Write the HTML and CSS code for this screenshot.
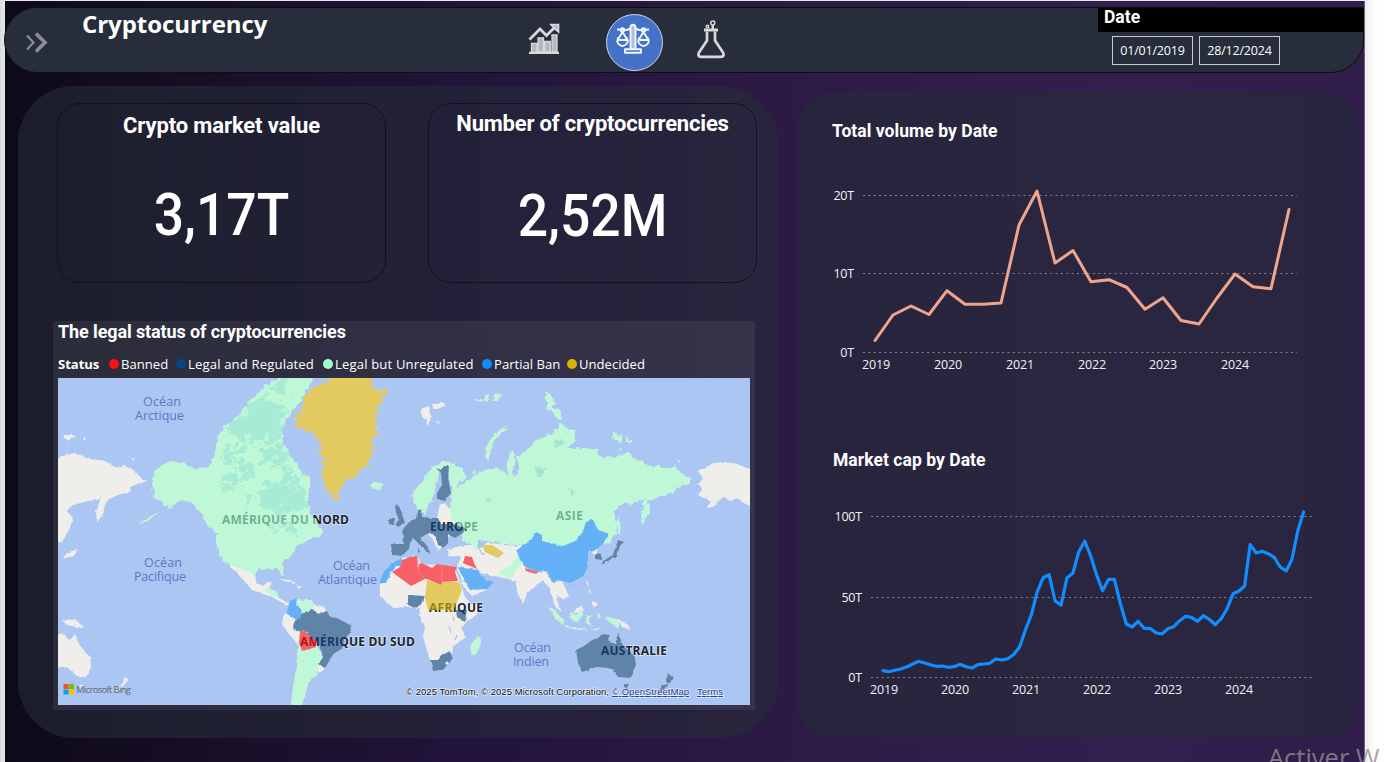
FILE: index.html
```html
<!DOCTYPE html>
<html lang="en">
<head>
<meta charset="utf-8">
<title>Cryptocurrency</title>
<link rel="stylesheet" href="styles.css">
</head>
<body>
<div class="window">
<div class="report">
  <header class="topbar">
    <svg class="chevrons" width="24" height="22" viewBox="0 0 24 22"><path d="M2 3.5 8.500 10.500 2 17.500" stroke-width="2.200"/><path d="M11 1.500 20 10.500 11 19.500" stroke-width="3.600"/></svg>
    <h1 class="brand">Cryptocurrency</h1>
    <nav class="nav">
      <a class="nav-item nav-chart"><svg width="32" height="32" viewBox="0 0 32 32"><g fill="none" stroke="#d8d9dc"><path d="M1 29.800h30" stroke-width="2.200"/><g fill="#b4b7bc" stroke-width="1.300"><path d="M3.500 20.500h5.500v9h-5.500zM10 15h5.500v14H10zM16.800 18.500h5.500V29h-5.500zM24 12h5v17h-5z"/></g><path d="M1.500 16.500 12 6l6.500 6.500L27 4" stroke-width="2.800"/><path d="M23 1.500h7.500V9l-3-2.500z" fill="#b4b7bc" stroke-width="1.700"/></g></svg></a>
      <a class="nav-item nav-scales"><svg width="34" height="32" viewBox="0 0 34 32"><g fill="none" stroke="#f2f5fb" stroke-width="1.900" stroke-linejoin="round"><path fill="#a9bfe6" d="M14.500 26V4.500Q14.500 1.800 17 1.800t2.500 2.700V26"/><path d="M9 26.200h16v3.600H9z"/><path d="M14.500 5.500 11 7 1 6.500M19.500 5.500 23 7l10-.5" stroke-width="2"/><circle cx="6.500" cy="7" r="1.800"/><circle cx="27.500" cy="7" r="1.800"/><path d="M6.500 9 2.500 15.500M6.500 9l4 6.500M27.500 9l-4 6.500M27.500 9l4 6.500M1 17h11M22 17h11"/><path d="M2.500 14.500Q.3 18 2.100 20.500 4 23 6.500 23t4.400-2.500q1.800-2.500-.4-6M23.500 14.500q-2.200 3.500-.4 6Q25 23 27.500 23t4.400-2.500q1.800-2.500-.4-6"/></g></svg></a>
      <a class="nav-item nav-flask"><svg width="28" height="40" viewBox="0 0 28 40"><g fill="none" stroke="#d8d9dc" stroke-width="2" stroke-linejoin="round"><path d="M10 11.500v9L2 32.500q-1.800 4 2 4.300h20q3.800-.3 2-4.300L18 20.500v-9" stroke-width="2.700"/><path d="M7 10h14" stroke-width="3"/><circle cx="15.800" cy="3" r="2" stroke-width="1.500"/><circle cx="10.500" cy="6.500" r="1.300" stroke-width="1.400"/><path d="M15.800 5v5" stroke-width="2.400"/></g></svg></a>
    </nav>
    <section class="date-filter">
      <h2 class="date-title">Date</h2>
      <div class="date-fields"><span class="date-box">01/01/2019</span><span class="date-box">28/12/2024</span></div>
    </section>
  </header>

  <main class="content">
    <section class="panel panel-left">
      <div class="cards">
        <article class="card"><h2 class="card-title">Crypto market value</h2><p class="card-value">3,17T</p></article>
        <article class="card card-count"><h2 class="card-title">Number of cryptocurrencies</h2><p class="card-value">2,52M</p></article>
      </div>
      <article class="map-card">
        <h2 class="map-title">The legal status of cryptocurrencies</h2>
        <ul class="legend">
          <li class="legend-name">Status</li>
          <li class="key"><i class="dot banned"></i><span class="w1">Banned</span></li>
          <li class="key"><i class="dot regulated"></i><span class="w2">Legal and Regulated</span></li>
          <li class="key"><i class="dot unregulated"></i><span class="w3">Legal but Unregulated</span></li>
          <li class="key"><i class="dot partial"></i><span class="w4">Partial Ban</span></li>
          <li class="key"><i class="dot undecided"></i><span class="w5">Undecided</span></li>
        </ul>
        <svg class="map" width="692" height="327" viewBox="58 378 692 327">
          <defs>
            <filter id="coast" x="-5%" y="-5%" width="110%" height="110%"><feTurbulence type="fractalNoise" baseFrequency="0.18" numOctaves="3" seed="4"/><feDisplacementMap in="SourceGraphic" scale="7" xChannelSelector="R" yChannelSelector="G"/></filter>
            <filter id="fjords" x="-10%" y="-5%" width="120%" height="110%"><feTurbulence type="fractalNoise" baseFrequency="0.12 0.3" numOctaves="3" seed="7"/><feDisplacementMap in="SourceGraphic" scale="15" xChannelSelector="R" yChannelSelector="G"/></filter>
            <filter id="border" x="-5%" y="-5%" width="110%" height="110%"><feTurbulence type="fractalNoise" baseFrequency="0.2" numOctaves="2" seed="9"/><feDisplacementMap in="SourceGraphic" scale="3" xChannelSelector="R" yChannelSelector="G"/></filter>
            <filter id="patchy" x="-10%" y="-10%" width="120%" height="120%"><feTurbulence type="fractalNoise" baseFrequency="0.1" numOctaves="4" seed="2"/><feDisplacementMap in="SourceGraphic" scale="32" xChannelSelector="R" yChannelSelector="G"/></filter>
            <path id="america" d="M152 483 155 470 167 462 183 464 198 469 210 467 215 453 217 440 223 427 237 417 250 400 263 388 277 378 280 374H314L310 385 300 400 292 410 283 427 282 443 288 450 295 463 310 480 308 497 308 508 313 517 323 533 313 538 298 545 290 557 282 563 284 575 280 574 277 568 258 569 255 575 233 565 223 560 217 550 216 533 207 523 200 512 193 503 183 500 173 504 157 515 168 507 162 503 155 497Z"/>
            <g id="green">
              <g filter="url(#coast)">
                <use href="#america"/>
                <path d="M370 485 376 482 383 484 381 489 373 490Z"/>
                <path d="M412 502 413 492 423 482 432 467 442 462 450 462 465 472 466 479 458 482 456 488 470 480 477 474 493 468 503 470 508 477 507 462 512 450 515 462 512 477 519 474 517 457 527 450 537 440 553 433 560 423 567 428 575 432 574 440 568 448 583 448 597 450 600 458 617 457 628 453 637 460 653 467 673 467 690 478 690 485 676 487 675 492 657 498 649 501 650 510 643 524 640 517 642 507 647 498 637 503 620 505 612 513 618 523 617 533 608 543 602 545 596 534 583 550H560L537 542 520 545 503 544 490 541 478 540 480 550 467 543 462 537 465 530 453 520 450 507 452 493 448 470 440 470 435 493 430 503 425 513 419 511 416 505Z"/>
                <path d="M507 428 498 436 492 446 489 460 485 459 487 445 493 434 504 427ZM546 393 551 394 555 408 561 412 562 420 556 418 552 411 546 408ZM612 433 624 435 621 441 613 440ZM625 437l7 3-4 2ZM474 400l7-2 2 3-6 1ZM485 396l5-2-1 7-3 0ZM493 397l9-4-4 7-4 0ZM618 447l4 2-3 2ZM676 459l5-1-1 3ZM472 472l4-2-3 7Z"/>
              </g>
              <g filter="url(#border)">
                <path d="M265 590 269 588 277 592 278 598 273 596ZM295 599 303 600 312 600 314 605 310 610 307 615 301 611 297 605Z"/>
                <path d="M298 642 302 650 309 650 317 646 323 657 317 665 319 672 313 678 308 683 306 692 302 705H291L293 687 297 667Z"/>
                <path d="M517 556 523 560 513 577 508 578 498 573 503 568 511 565Z"/>
                <path d="M480 636 481 643 477 653 472 656 470 647 473 641ZM548 607 553 609 565 622 563 625 556 619ZM565 625 577 628 588 629 579 630 566 627ZM570 612 576 615 581 609 583 614 578 622 571 620ZM586 617l7-2-5 4 3 6-4 0ZM597 613l3 2-1 4ZM605 618 610 617 619 620 619 628 611 623ZM591 629l10-1-7 3Z"/>
                <path d="M618 517l3 8-1 9-2-3ZM148 518l10-6-9 8-11 4Z"/>
              </g>
            </g>
            <g id="yellow">
              <path filter="url(#fjords)" d="M297 427 295 418 303 410 305 398 312 388 327 382 333 374H370L373 387 387 391 378 407 375 420 377 430 373 440 372 453 368 465 355 475 343 483 338 500 328 493 324 483 323 467 320 447 317 435 308 430Z"/>
              <path d="M427 580 441 585 442 582 459 582 462 590 457 602 453 612 442 610 428 610 425 598Z"/>
              <path d="M483 545 492 545 504 553 498 558 485 552Z"/>
            </g>
            <g id="navy" filter="url(#border)">
              <path d="M298 615 308 612 313 609 318 614 327 611 330 617 337 618 352 626 350 633 344 640 343 648 332 655 328 663 325 668 318 664 323 658 321 648 317 642 310 637 305 631 300 632 293 628 294 623Z"/>
              <path d="M436 468 441 470 444 466 449 466 448 477 451 493 445 501 437 499 437 492 442 485 441 473Z"/>
              <path d="M395 505 399 506 402 514 405 523 398 527 395 525 399 520 396 513ZM390 518 395 518 394 525 388 524Z"/>
              <path d="M402 530 408 523 417 518 418 511 421 509 422 517 438 518 441 524 452 524 465 528 463 533 455 538 448 534 448 542 443 548 438 545 436 537 430 533 420 537 427 546 431 554 426 551 418 543 413 538 410 543 409 549 402 556 392 555 391 544 404 544ZM418 547l2 5-2 1Z"/>
              <path d="M408 595 425 596 422 604 415 608 408 605ZM456 610 467 610 465 622 457 617ZM430 660 438 660 442 655 450 651 453 658 443 670 433 671Z"/>
              <path d="M576 650 584 646 592 640 598 638 603 634 610 635 608 640 615 644 618 633 623 645 628 650 635 657 636 665 630 678 618 677 614 670 608 668 597 667 582 672 578 663ZM624 684h5l-2 5-3-1Z"/>
              <path d="M618 540 624 542 620 546 617 556 608 561 602 565 603 561 613 555ZM596 553l5 1 0 6-5-1ZM667 673 674 678 670 683 667 682ZM668 684l-6 8-6 2 7-9Z"/>
            </g>
            <g id="blue" filter="url(#border)">
              <path d="M297 598 290 601 286 613 295 619 299 619 302 610 296 605Z"/>
              <path d="M392 562 402 558 401 565 392 570 386 583H379L383 573Z"/>
              <path d="M458 567 477 570 485 579 494 582 488 589 470 590 465 582Z"/>
              <path d="M517 550 530 540 536 532 542 535 542 541 563 546 575 541 583 532 586 521 593 520 598 530 608 533 604 543 597 549 588 553 588 567 583 577 570 583 558 580 552 582 547 571 538 572 525 567 519 558ZM569 585l3 0-1 3Z"/>
            </g>
            <g id="red">
              <path d="M300 632 305 631 310 637 317 641 316 647 309 649 302 651 299 642Z"/>
              <path d="M402 560 410 557 417 556 418 570 419 564 422 563 432 568 437 564 457 567 455 572 458 581 442 582 441 585 427 579 425 579 411 586 392 572 400 567ZM465 556 472 557 474 563 477 569 463 563ZM525 568 538 572 536 574 526 571Z"/>
            </g>
          </defs>
          <rect x="58" y="378" width="692" height="327" fill="#abc6f2"/>
          <g fill="#efeeeb" filter="url(#border)">
            <path d="M55 458 75 453 90 459 105 461 115 467 125 466 134 470 140 477 147 481 138 484 130 487 131 491 118 495 107 500 103 513 97 523 96 511 101 498 88 501 70 506 67 511 73 518 70 528 63 540 55 543Z"/>
            <path d="M697 483 703 479 698 470 706 468 713 463 725 462 737 464 752 470V507L744 503 737 498 730 501 723 497 713 507 706 508 711 502 698 495 703 489Z"/>
            <path d="M229 564 255 573 256 583 263 586 268 582 272 583 268 590 278 597 286 602 291 605 286 605 272 597 252 590 244 581 235 571Z"/>
            <path d="M280 579l10 1 9 5-8-2-10-3ZM295 586l7 0-3 3Z"/>
            <path d="M285 613 299 619 293 624 293 630 299 632 300 638 298 644 288 633 282 623ZM310 603 325 607 326 612 314 614ZM317 664 325 668 321 673 316 670Z"/>
            <path d="M437 517 440 505 445 503 450 508 456 522 450 528 430 528 425 530 432 540 439 550 444 544 450 536 440 528Z"/>
            <path d="M447 550 460 546 475 545 482 548 487 542 505 545 515 546 527 543 529 572 545 571 546 577 536 586 527 593 523 604 518 594 515 581 508 579 495 576 480 573 475 565 482 585 490 588 472 596 463 585 457 567 461 557 448 556Z"/>
            <path d="M545 570 552 582 562 581 569 596 563 600 556 594 559 606 562 612 555 607 550 588 542 580ZM588 552l10-5-2 8Z"/>
            <path d="M392 562 402 558 417 556 422 564 437 565 455 567 460 582 465 597 472 605 482 604 476 615 467 622 462 627 465 637 453 647 452 658 443 670 433 671 428 653 423 637 425 627 419 615 420 608 408 607 393 608 380 595 380 583 383 573Z"/>
            <path d="M618 619 626 622 631 630 622 627ZM572 612l10-7 2 5-5 3Z"/>
            <path d="M56 635 63 633 70 640 75 634 78 643 90 657 91 667 87 677 78 677 67 667 56 667ZM62 620 75 619 84 628 77 627 67 625ZM125 677 129 680 124 685 116 693ZM79 685l5 0-2 4Z"/>
            <path d="M421 409l7-3 2 3 1 8-3 9-2-6-4-3ZM432 404l11-2 2 3-7 4-5 0ZM437 420l3 3-2 1ZM65 434l11 2-6 4-7-2ZM82 438l5 1-2 2ZM131 458l4 0-2 3ZM586 580l3 3-1 4ZM588 589l3 2-1 4ZM592 601l5 2-3 5ZM67 553l10-4-3 7-11 3Z"/>
          </g>
          <g fill="#efeeeb"><use href="#green"/><use href="#yellow"/><use href="#navy"/><use href="#blue"/><use href="#red"/></g>
          <g class="continent">
            <text x="222" y="524" textLength="127">AMÉRIQUE DU NORD</text><text x="300" y="646" textLength="115">AMÉRIQUE DU SUD</text>
            <text x="430" y="531" textLength="48">EUROPE</text><text x="556" y="520" textLength="27">ASIE</text>
            <text x="429" y="612" textLength="54">AFRIQUE</text><text x="601" y="655" textLength="66">AUSTRALIE</text>
          </g>
          <g opacity=".63">
            <use href="#green" fill="#a2ffca"/><use href="#yellow" fill="#dbb610"/><use href="#navy" fill="#094782"/><use href="#blue" fill="#148fff"/><use href="#red" fill="#fd0e1b"/>
          </g>
          <clipPath id="inland"><use href="#america"/></clipPath>
          <g clip-path="url(#inland)"><g fill="#8fdcd6" opacity=".5" filter="url(#patchy)">
            <path d="M225 425 262 395 285 410 280 440 235 441ZM225 450l22-4-5 14-18 3ZM255 448l30 0 4 10-20 8ZM236 462l18 8-10 12ZM262 488l22-6 20 10 3 20-22 2-20-8ZM283 462l16 14 3 14-18-12ZM225 472l10 6-6 15-8-9ZM268 384l20-4-10 18ZM268 520l8 4-2 12ZM284 522l14 3-2 12-8-3ZM245 496l7 3-2 8Z"/>
          </g></g>
          <g fill="#7fbfc0" opacity=".35" filter="url(#coast)"><path d="M553 440l10-1 3 5-11 3ZM536 467l9 1-4 10-5-2ZM568 488l6 3-1 8ZM485 498l6 1-3 3Z"/></g>
          <g fill="none" stroke="#9fb9dc" stroke-width="1"><path d="M480 541l-2 5 4 8 3 0M453 617l1 4M449 626l2 7M455 640l2-5"/></g>
          <path fill="none" stroke="#f98a8d" stroke-width=".8" d="M418 557l0 14 7 8M442 566v16"/>
          <circle cx="447" cy="663" r="1.600" fill="#efeeeb"/>
          <g class="ocean">
            <text x="143" y="406" textLength="38">Océan</text><text x="135" y="420" textLength="49">Arctique</text>
            <text x="144" y="567" textLength="38">Océan</text><text x="134" y="581" textLength="52">Pacifique</text>
            <text x="333" y="570" textLength="37">Océan</text><text x="318" y="584" textLength="59">Atlantique</text>
            <text x="514" y="652" textLength="37">Océan</text><text x="513" y="666" textLength="36">Indien</text>
          </g>
          <path fill="#f25022" d="M63.500 684h5v5h-5z"/><path fill="#7fba00" d="M69 684h5v5h-5z"/><path fill="#00a4ef" d="M63.500 689.500h5v5h-5z"/><path fill="#ffb900" d="M69 689.500h5v5h-5z"/>
          <text class="bing" x="76" y="693" textLength="55">Microsoft Bing</text>
          <g class="credits"><text x="406" y="695" textLength="203">© 2025 TomTom, © 2025 Microsoft Corporation,</text><text class="link" x="612" y="695" textLength="77">© OpenStreetMap</text><text class="link" x="697" y="695" textLength="26">Terms</text></g>
        </svg>
      </article>
    </section>

    <section class="panel panel-right">
      <article class="chart">
        <h2 class="chart-title">Total volume by Date</h2>
        <svg class="plot" width="500" height="230" viewBox="820 160 500 230">
          <path class="grid" d="M863 195.500H1297M863 273.500H1297M863 352.500H1297"/>
          <g class="axis axis-y"><text x="854" y="200">20T</text><text x="854" y="278">10T</text><text x="854" y="357">0T</text></g>
          <g class="axis axis-x"><text x="876" y="369">2019</text><text x="948" y="369">2020</text><text x="1020" y="369">2021</text><text x="1092" y="369">2022</text><text x="1163" y="369">2023</text><text x="1235" y="369">2024</text></g>
          <polyline class="line volume" points="875,340.500 893,315 911,306 929,314.500 947,290.700 965,304.300 983,304.300 1001,303 1019,225 1037,191 1055,263 1073,250.500 1091,281.700 1109,279.700 1127,287.500 1145,309.300 1163,297.700 1181,320.500 1199,324 1217,298 1235,274 1253,286.700 1271,288.700 1289,209.500"/>
        </svg>
      </article>
      <article class="chart chart-cap">
        <h2 class="chart-title">Market cap by Date</h2>
        <svg class="plot" width="500" height="220" viewBox="820 490 500 220">
          <path class="grid" d="M871 516.500H1315M871 597.500H1315M871 677.500H1315"/>
          <g class="axis axis-y"><text x="862" y="521">100T</text><text x="862" y="602">50T</text><text x="862" y="682">0T</text></g>
          <g class="axis axis-x"><text x="884" y="694">2019</text><text x="955" y="694">2020</text><text x="1026" y="694">2021</text><text x="1097" y="694">2022</text><text x="1168" y="694">2023</text><text x="1239" y="694">2024</text></g>
          <polyline class="line cap" points="883,670.700 888.900,671.700 894.900,670.300 900.800,669 906.700,667 912.700,664 918.600,661.300 924.500,663 930.500,664.700 936.400,666.300 942.300,666 948.300,667.300 954.200,666.700 960.100,664.300 966.100,666.700 972,668 977.900,664.700 983.900,664 989.800,663.300 995.700,659 1001.700,660 1007.600,658.700 1013.500,654.700 1019.500,647.300 1025.400,630 1031.300,615 1037.300,591.700 1043.200,577.700 1049.100,574.700 1055.100,601 1061,605.300 1066.900,578 1072.900,573 1078.800,551.700 1084.700,541.200 1090.700,556 1096.600,574.700 1102.500,590.700 1108.500,579.300 1114.400,579.300 1120.300,603.300 1126.300,624 1132.200,627 1138.100,621.300 1144.100,628.300 1150,628.300 1155.900,632.700 1161.900,634 1167.800,628.700 1173.700,626.700 1179.700,620.700 1185.600,616.300 1191.500,617.300 1197.500,621.300 1203.400,615.700 1209.300,619.300 1215.300,624.700 1221.200,618.700 1227.100,608.700 1233.100,593.700 1239,591 1244.600,586 1250.200,544.500 1256.200,553 1262.200,551.300 1268.200,553.700 1274.200,557.300 1280.200,567 1286.200,571 1292,559.300 1297.800,530.700 1303.600,512"/>
        </svg>
      </article>
    </section>
  </main>
</div>
</div>
<div class="watermark">Activer W</div>
</body>
</html>
```
FILE: styles.css
```css
* { box-sizing: border-box; }
body { margin: 0; width: 1384px; height: 762px; overflow: hidden; position: relative; background: #fdfdfd; font-family: "Open Sans", "Noto Sans", sans-serif; color: #fff; }
h1, h2, p, ul { margin: 0; padding: 0; }
.window { height: 762px; padding: 1px 0 0 5px; background: linear-gradient(90deg, #d9dadb 0, #e6e7e8 5px, #e6e7e8 1364px, #ededed 1365px, #fdfdfd 1374px); }
.report { width: 1360px; height: 761px; padding-top: 6px; background: linear-gradient(90deg, #0e0a19 0, #170f25 190px, #21133a 440px, #2d1a44 760px, #331f4e 1120px, #311d4b 1360px); border-right: 1px solid #6d6178; }

.topbar { display: flex; width: 1360px; height: 66px; margin-left: -1px; background: #272d3b; border: 1.5px solid #0d0e14; border-radius: 33px 0 33px 33px; overflow: hidden; }
.chevrons { flex: none; margin: 24px 0 0 20px; fill: none; stroke: #8b8e92; }
.brand { flex: none; width: 400px; margin: -2px 0 0 33px; font-size: 24px; line-height: 35px; font-weight: 700; letter-spacing: -.05px; }
.nav { display: flex; flex: none; width: 616px; align-items: flex-start; }
.nav-item { display: flex; }
.nav-chart { margin: 15px 0 0 46px; }
.nav-scales { width: 57px; height: 57px; margin: 6px 0 0 46px; padding-top: 8px; justify-content: center; background: #4472c8; border: 1.5px solid #cfd6e6; border-radius: 50%; }
.nav-scales svg { margin-right: 4px; }
.nav-flask { margin: 12px 0 0 34px; }
.date-filter { flex: 1; }
.date-title { height: 24px; padding-left: 6px; background: #000; font: 700 17.500px/19px Roboto, sans-serif; }
.date-fields { display: flex; gap: 6px; padding: 4px 0 0 14px; }
.date-box { width: 81px; height: 29px; border: 1px solid #c9cacd; font-size: 12.500px; line-height: 28px; text-align: center; letter-spacing: -.2px; white-space: nowrap; }

.content { display: flex; gap: 20px; padding: 13px 0 0 13px; }
.panel { background: rgba(37, 43, 56, .6); }
.panel-left { width: 760px; height: 652px; padding: 17px 0 0 35px; border-radius: 56px; }
.panel-right { width: 560px; height: 646px; margin-top: 6px; padding: 28px 0 0 22px; border-radius: 34px; }

.cards { display: flex; gap: 42px; padding-left: 4px; }
.card { width: 329px; height: 180px; border: 1.500px solid #11111a; border-radius: 23px; text-align: center; font-family: Roboto, sans-serif; }
.card-title { padding-top: 8px; font-size: 22px; line-height: 27px; font-weight: 700; letter-spacing: -.12px; }
.card-count .card-title { padding-top: 6px; letter-spacing: -.2px; }
.card-value { padding-top: 40px; font-size: 59px; line-height: 72px; font-weight: 500; transform: scaleX(.905); }
.card-count .card-value { padding-top: 43px; }

.map-card { width: 702px; height: 389px; margin-top: 38px; padding: 0 5px; background: rgba(255, 255, 255, .065); }
.map-title { font: 700 18px/22px Roboto, sans-serif; letter-spacing: -.11px; }
.legend { display: flex; height: 35px; padding-top: 11px; list-style: none; font-size: 13.100px; line-height: 20px; white-space: nowrap; }
.legend-name { width: 51px; font-weight: 700; letter-spacing: -.05px; }
.key { display: flex; height: 20px; align-items: center; }
.key span { display: block; }
.dot { width: 10px; height: 10px; margin-right: 2px; border-radius: 50%; }
.w1 { width: 55px; } .w2 { width: 135px; letter-spacing: .15px; } .w3 { width: 147px; letter-spacing: .15px; } .w4 { width: 73px; }
.banned { background: #fd0e1b; }
.regulated { background: #094782; }
.unregulated { background: #9fffcb; }
.partial { background: #118dff; }
.undecided { background: #d9b300; }
.map { display: block; }
.continent { font: 700 12px "Open Sans", sans-serif; fill: #20222a; stroke: #fff; stroke-opacity: .5; stroke-width: 1.500px; paint-order: stroke; }
.ocean { font: 12.500px "Open Sans", sans-serif; fill: #5a78c9; }
.bing { font: 9.500px "Open Sans", sans-serif; fill: #62666c; }
.credits { font: 9.500px "Liberation Sans", sans-serif; fill: #111; stroke: #fff; stroke-opacity: .6; stroke-width: 1.500px; paint-order: stroke; }
.link { fill: #1a3a9c; text-decoration: underline; }

.chart { height: 329px; padding-left: 12px; }
.chart-title { font: 700 17.500px/22px Roboto, sans-serif; letter-spacing: .05px; }
.plot { display: block; margin: 18px 0 0 -12px; }
.chart-cap .chart-title { padding-left: 1px; }
.chart-cap .plot { margin-top: 19px; }
.grid { stroke: #86818f; stroke-width: 1; stroke-dasharray: 2 3.350; }
.axis { font-size: 12.500px; fill: #f3f3f5; letter-spacing: -.2px; }
.axis-y { text-anchor: end; }
.axis-x { text-anchor: middle; }
.line { fill: none; stroke-width: 3; stroke-linejoin: round; stroke-linecap: round; }
.volume { stroke: #f0a58a; }
.cap { stroke: #118dff; stroke-width: 3.200; }

.watermark { position: absolute; left: 1268px; top: 741px; font-size: 25.500px; line-height: 32px; color: rgba(145, 142, 148, .8); white-space: nowrap; }
```
